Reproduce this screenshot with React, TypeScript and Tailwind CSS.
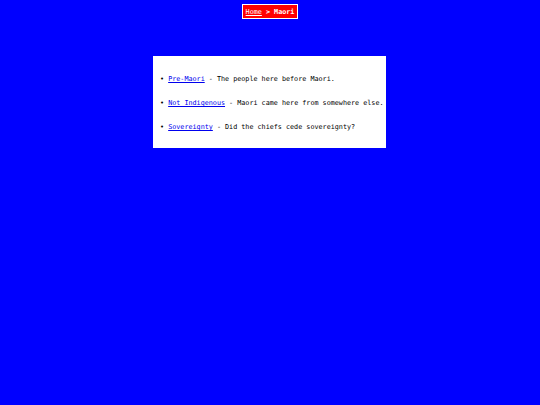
const items = [
  { label: "Pre-Maori", text: "The people here before Maori." },
  { label: "Not Indigenous", text: "Maori came here from somewhere else." },
  { label: "Sovereignty", text: "Did the chiefs cede sovereignty?" },
];

export default function App() {
  return (
    <div className="min-h-[405px] w-full bg-[#0000ff] font-['DejaVu_Sans_Mono',monospace] text-[6.75px]">
      {/* breadcrumb */}
      <div className="flex justify-center pt-[4px]">
        <div className="border border-white bg-[#ff0000] px-[2.5px] py-[2.5px] font-bold leading-[8px] text-white whitespace-pre">
          <a href="#" className="font-normal underline">Home</a> &gt; Maori
        </div>
      </div>

      {/* topic list */}
      <div className="mt-[37px] flex justify-center pr-[1px]">
        <ul className="flex w-[233px] flex-col gap-[16px] bg-white pt-[19px] pb-[17px] pl-[7px] leading-[8px] text-black">
          {items.map((item) => (
            <li key={item.label} className="whitespace-pre">
              {"• "}
              <a href="#" className="text-[#0000ee] underline">
                {item.label}
              </a>
              {" - " + item.text}
            </li>
          ))}
        </ul>
      </div>
    </div>
  );
}
